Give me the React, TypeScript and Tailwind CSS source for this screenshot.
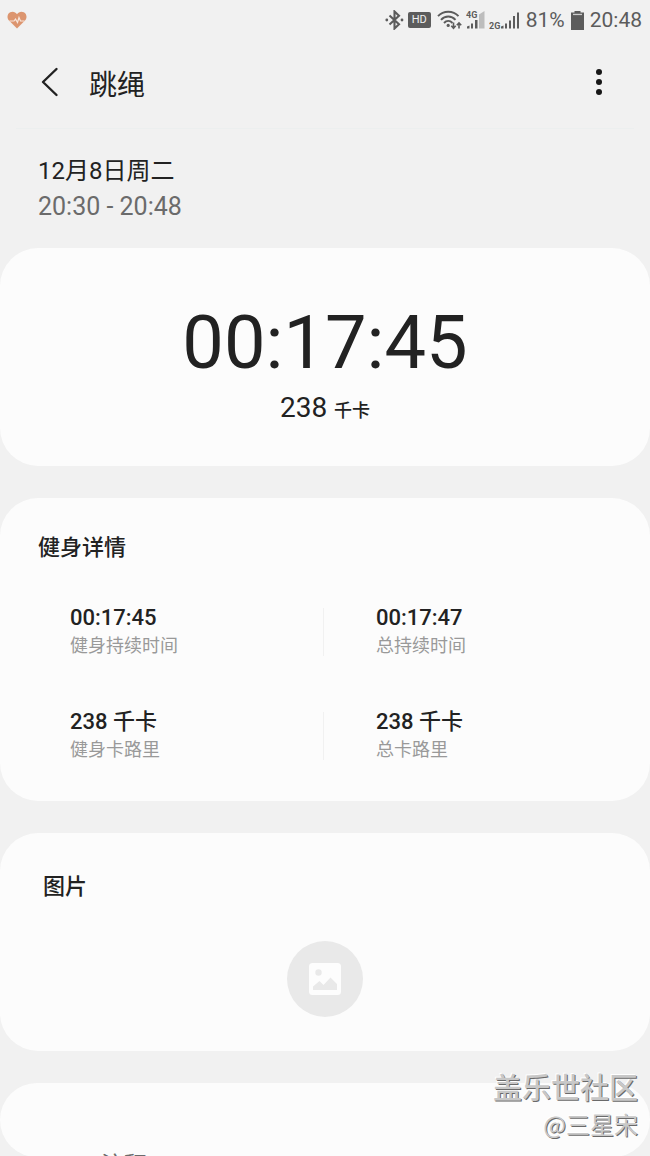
import type { ReactNode } from "react";

interface Stat {
  value: string;
  label: string;
}

const stats: Stat[][] = [
  [
    { value: "00:17:45", label: "健身持续时间" },
    { value: "00:17:47", label: "总持续时间" },
  ],
  [
    { value: "238 千卡", label: "健身卡路里" },
    { value: "238 千卡", label: "总卡路里" },
  ],
];

function HeartIcon() {
  return (
    <svg width="20" height="18" viewBox="0 0 20 18" aria-hidden="true">
      <path
        d="M10 17.500 2 9.600C-.6 6.600.4 2.600 3.200 1.200 5.800 0 8.600.9 10 3.200c1.400-2.300 4.200-3.200 6.800-2 2.800 1.400 3.800 5.400 1.200 8.400z"
        fill="#dc956f"
      />
      <path d="M2.500 10H7l1.500-2 2 3.500 1.500-5 1.500 3.500h4" fill="none" stroke="#f8e6dc" strokeWidth="1.200" />
    </svg>
  );
}

function BluetoothIcon() {
  return (
    <svg width="19" height="20" viewBox="0 0 19 20" aria-hidden="true">
      <path d="M4.500 5.500 14 14.200 9.500 18.500v-17L14 5.800 4.500 14.500" fill="none" stroke="#5c5c5c" strokeWidth="2.100" />
      <circle cx="1.800" cy="10" r="1.400" fill="#5c5c5c" />
      <circle cx="17" cy="10" r="1.400" fill="#5c5c5c" />
    </svg>
  );
}

function WifiIcon() {
  return (
    <svg width="26" height="20" viewBox="0 0 26 20" aria-hidden="true">
      <g fill="none" stroke="#5c5c5c" strokeWidth="1.900">
        <path d="M1 6.200C6.500.3 16 .3 21.500 6.200" />
        <path d="M4 9.800c4-4.500 10.500-4.500 14.500 0" />
        <path d="M7 13c2.500-2.800 6-2.800 8.500 0" />
        <path d="M16.500 12.500V18M14.300 15.800l2.200 2.400 2.200-2.400M22 18.500V13M19.800 15.300l2.200-2.400 2.200 2.400" strokeWidth="1.600" />
      </g>
      <circle cx="11.200" cy="15.400" r="1.600" fill="#5c5c5c" />
    </svg>
  );
}

function Signal4G() {
  return (
    <svg width="20" height="20" viewBox="0 0 20 20" aria-hidden="true">
      <text x="0" y="8" fontSize="9" fontWeight="700" fontFamily="Roboto, sans-serif" fill="#5c5c5c">4G</text>
      <path d="M13 4.500 18.500 1v17.500H13z" fill="#bdbdbd" />
      <path d="M1 18.500v-2l2.500-1v3zM5 18.500v-5h2v5zM9 18.500V10h2.500v8.500z" fill="#5c5c5c" />
    </svg>
  );
}

function Signal2G() {
  return (
    <svg width="31" height="20" viewBox="0 0 31 20" aria-hidden="true">
      <text x="0" y="19" fontSize="9" fontWeight="700" fontFamily="Roboto, sans-serif" fill="#5c5c5c">2G</text>
      <path
        d="M12 18.500v-2l2.500-1v3zM16 18.500v-5h2v5zM20 18.500v-8h2v8zM24 18.500V6h2v12.500zM28 18.500v-16h2v16z"
        fill="#5c5c5c"
      />
    </svg>
  );
}

function BatteryIcon() {
  return (
    <svg width="13" height="19" viewBox="0 0 13 19" aria-hidden="true">
      <path d="M3.500 0h6v1.500H13V5H0V1.500h3.500z" fill="#5c5c5c" />
      <path d="M2 2.800h9v1.400H2z" fill="#cfcfcf" />
      <path d="M0 4.500h13V19H0z" fill="#5c5c5c" />
    </svg>
  );
}

function StatusBar() {
  return (
    <div className="flex h-10 items-center justify-between pr-2 pl-[7px] text-[#5c5c5c]">
      <HeartIcon />
      <div className="flex items-center">
        <BluetoothIcon />
        <span className="ml-1 flex h-4 w-[23px] items-center justify-center rounded-xs bg-[#5c5c5c] text-[11px] leading-4 text-[#f1f1f1]">
          HD
        </span>
        <span className="ml-1.5 flex items-center gap-[3px]">
          <WifiIcon />
          <Signal4G />
          <Signal2G />
        </span>
        <span className="ml-1.5 text-[21px] leading-6">81%</span>
        <span className="mr-1.5 ml-1.5">
          <BatteryIcon />
        </span>
        <span className="text-[21px] leading-6">20:48</span>
      </div>
    </div>
  );
}

function Card({ children, className = "" }: { children: ReactNode; className?: string }) {
  return <section className={`rounded-[38px] bg-[#fcfcfc] ${className}`}>{children}</section>;
}

function StatCell({ value, label }: Stat) {
  return (
    <div>
      <p className="text-[22px] leading-7 font-medium">{value}</p>
      <p className="text-lg leading-7 text-[#999999]">{label}</p>
    </div>
  );
}

export default function App() {
  return (
    <div className="relative h-screen overflow-hidden bg-[#f1f1f1] font-[Roboto,'Noto_Sans_CJK_SC',sans-serif] text-[#222222]">
      <StatusBar />

      <header className="flex h-[88px] items-start justify-between pt-[22px] pr-[31px] pl-9">
        <div className="flex items-start gap-[25px]">
          <button type="button" aria-label="返回" className="flex h-10 w-7 items-center justify-center">
            <svg width="20" height="32" viewBox="0 0 20 32" fill="none" stroke="#222222" strokeWidth="2.400" strokeLinecap="round" strokeLinejoin="round">
              <path d="M16.500 3 3 16l13.500 13" />
            </svg>
          </button>
          <h1 className="pt-1 text-[28px] leading-10">跳绳</h1>
        </div>
        <button type="button" aria-label="更多" className="flex h-10 w-10 items-center justify-center">
          <svg width="6" height="28" viewBox="0 0 6 28" fill="#171717">
            <circle cx="3" cy="4" r="3" />
            <circle cx="3" cy="14" r="3" />
            <circle cx="3" cy="24" r="3" />
          </svg>
        </button>
      </header>
      <div className="mx-4 h-px bg-[#ecefef]" />

      <div className="h-[119px] px-[38px] pt-6">
        <p className="text-2xl leading-9">12月8日周二</p>
        <p className="text-[25px] leading-9 text-[#6b6b6b]">20:30 - 20:48</p>
      </div>

      <main className="flex flex-col gap-8">
        <Card className="flex h-[218px] flex-col items-center pt-[51px]">
          <p className="text-[74px] leading-[88px]">00:17:45</p>
          <p className="mt-[3px] text-[28px] leading-9">
            238 <span className="text-lg leading-9 font-medium">千卡</span>
          </p>
        </Card>

        <Card className="h-[303px] pt-[34px]">
          <h2 className="px-[38px] text-[22px] leading-8 font-medium">健身详情</h2>
          <div className="mt-10 flex flex-col gap-12">
            {stats.map((row, i) => (
              <div key={i} className="grid grid-cols-[253fr_1px_326fr] items-center pl-[70px]">
                <StatCell {...row[0]} />
                <div className="h-12 bg-[#f1f1f1]" />
                <div className="pl-[52px]">
                  <StatCell {...row[1]} />
                </div>
              </div>
            ))}
          </div>
        </Card>

        <Card className="h-[218px] pt-[38px]">
          <h2 className="px-[43px] text-[22px] leading-8 font-medium">图片</h2>
          <button
            type="button"
            aria-label="添加图片"
            className="mx-auto mt-[38px] flex h-[76px] w-[76px] items-center justify-center rounded-full bg-[#e9e9e9]"
          >
            <svg width="32" height="32" viewBox="0 0 32 32" aria-hidden="true">
              <rect width="32" height="32" rx="3.500" fill="#fdfdfd" />
              <circle cx="9.500" cy="9.500" r="3.200" fill="#e9e9e9" />
              <path d="M4 27v-3.500l6.500-5.500 4 4 7-7.500 6.500 6.500v6z" fill="#e9e9e9" />
            </svg>
          </button>
        </Card>

        <Card className="h-[74px] overflow-hidden pt-[67px]">
          <p className="pl-[101px] text-[23px] leading-8 text-[#6b6b6b]">注释</p>
        </Card>
      </main>

      <div className="absolute right-3 bottom-3.5 text-right font-['Noto_Sans_CJK_SC',sans-serif] text-[#c8c8c8] [text-shadow:1px_1px_0_#6a6a6a,-1px_-1px_0_#ffffff]">
        <p className="text-[29px] leading-10 font-medium">盖乐世社区</p>
        <p className="text-2xl leading-9">@三星宋</p>
      </div>
    </div>
  );
}
